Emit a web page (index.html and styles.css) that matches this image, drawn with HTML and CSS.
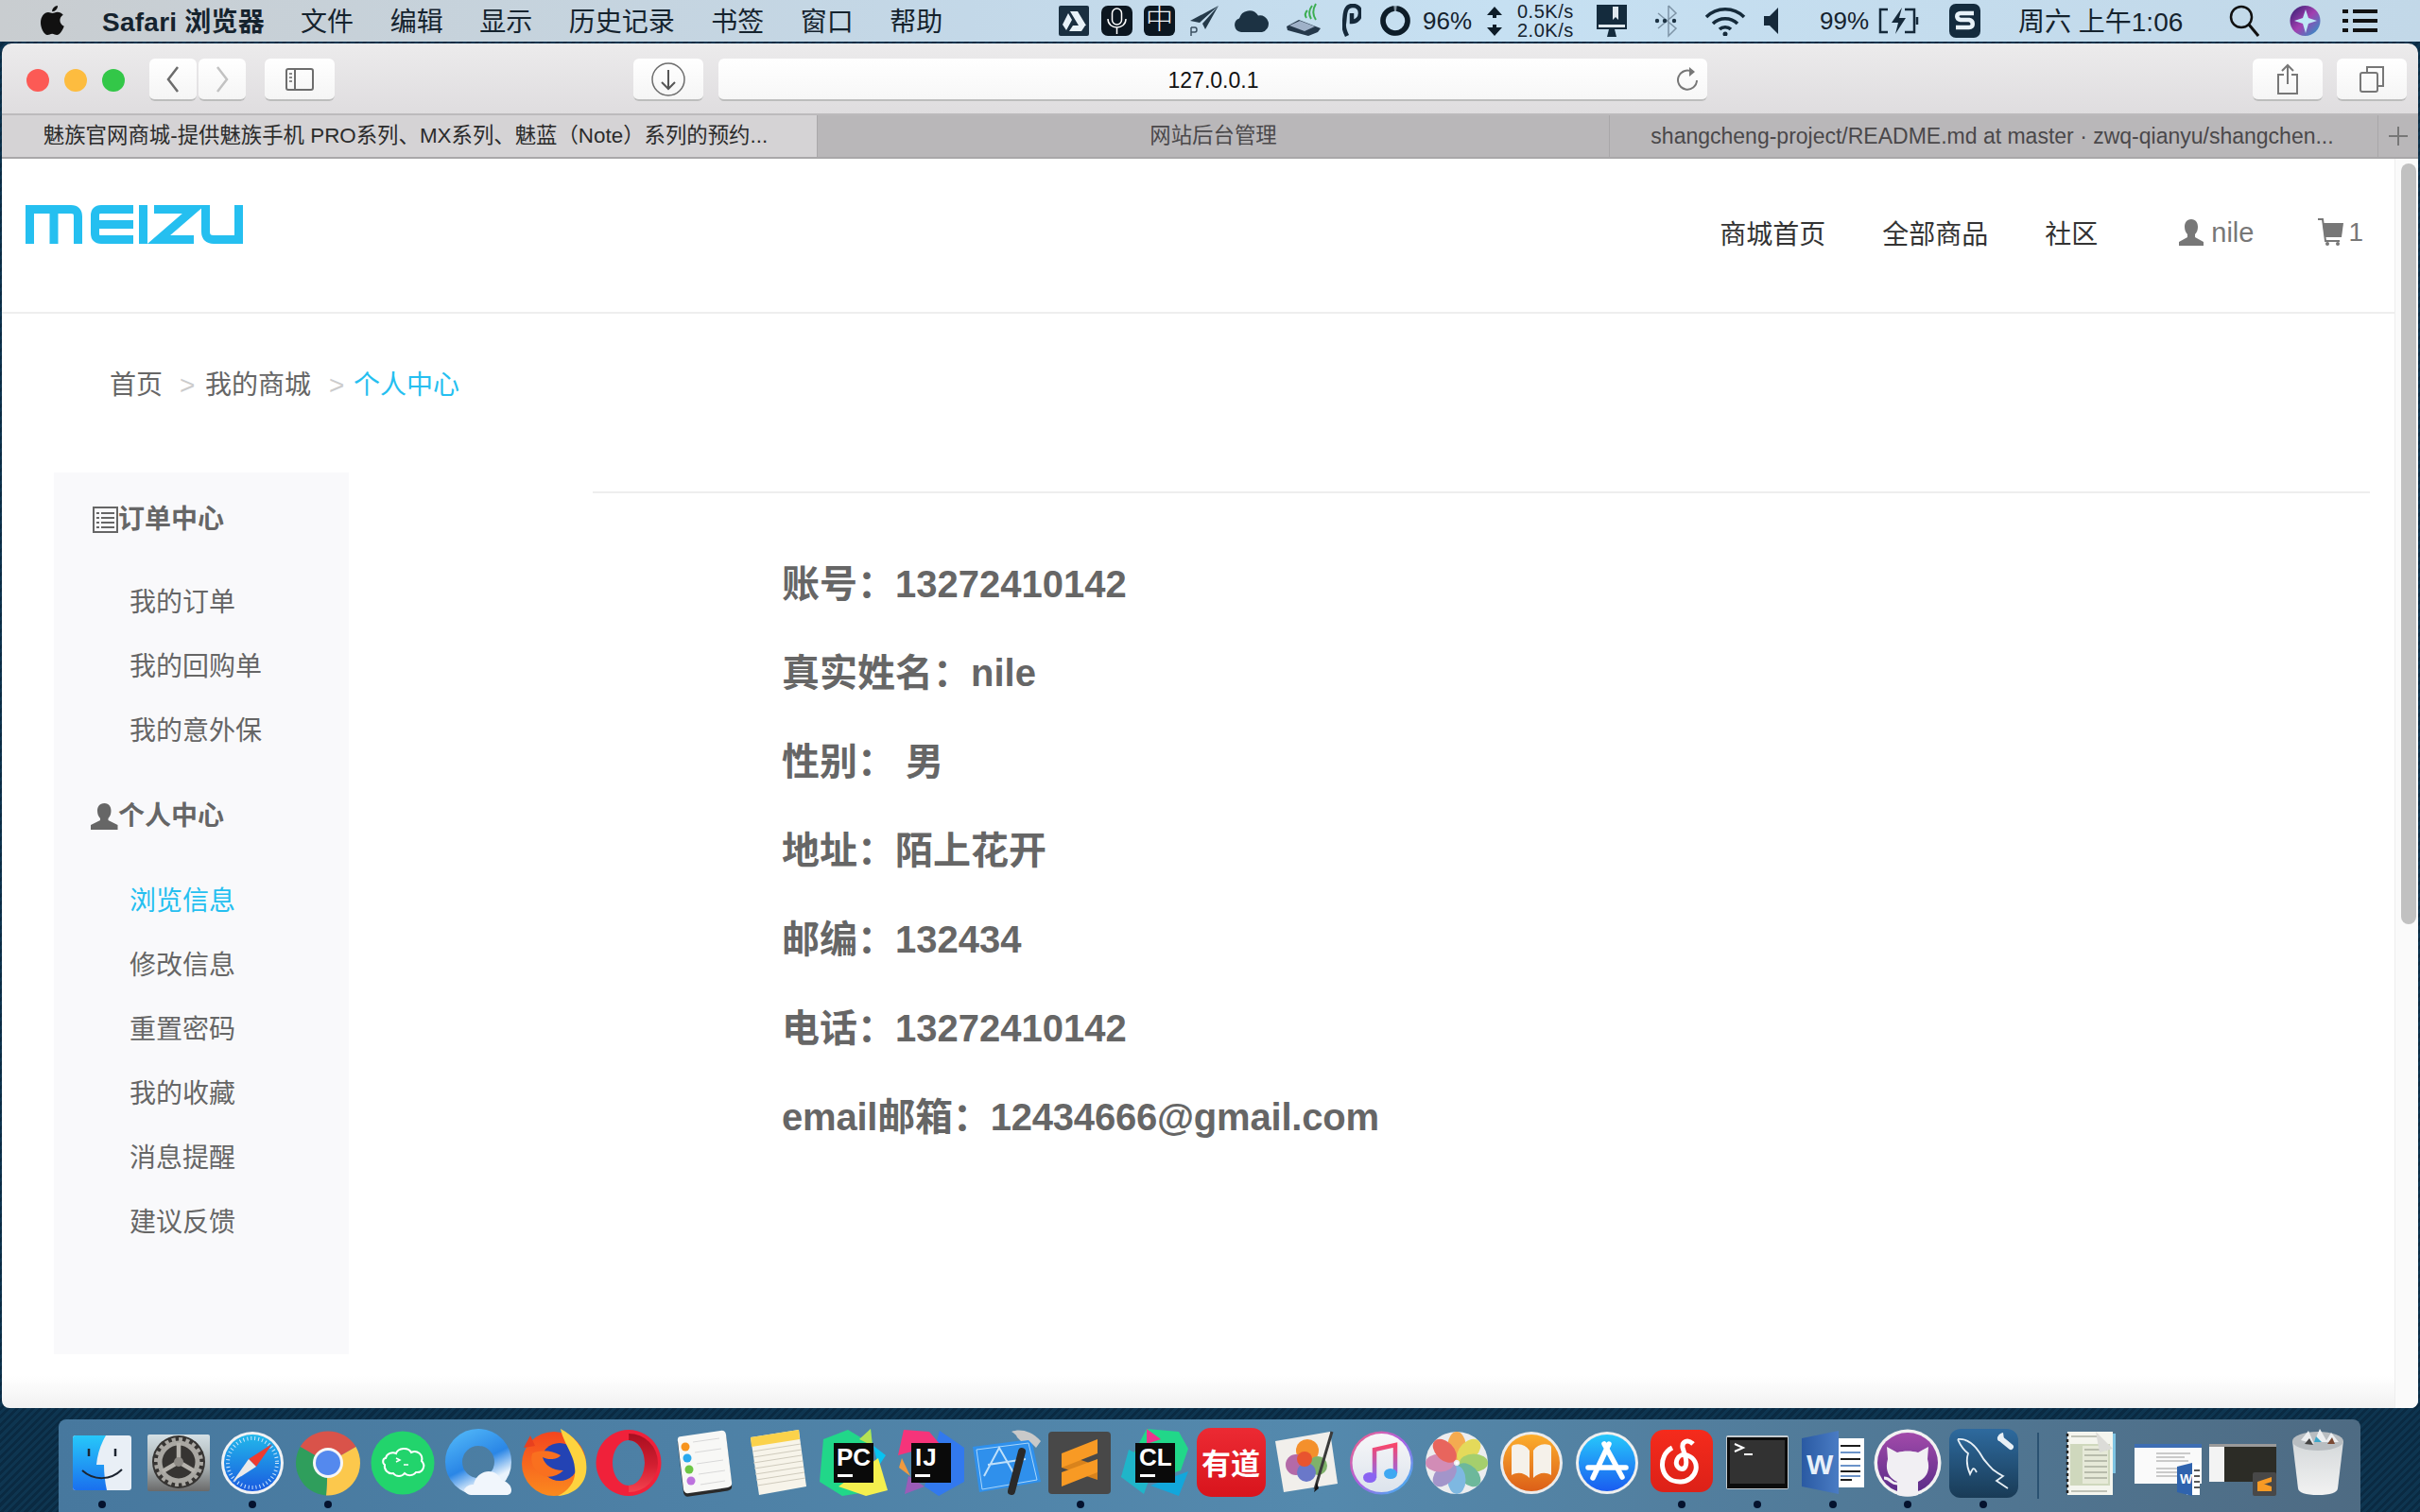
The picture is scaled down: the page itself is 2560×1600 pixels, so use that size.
FILE: index.html
```html
<!DOCTYPE html>
<html lang="zh-CN">
<head>
  <meta charset="UTF-8">
  <title>个人中心</title>
  <link rel="stylesheet" href="styles.css">
</head>
<body>
  <!-- Menu bar -->
  <header class="menubar">
    <svg class="apple" viewBox="0 0 28 34"><path d="M19 1c.3 3-2.600 6.400-5.800 6.200C12.800 4 16 1.200 19 1zM13.300 9c1.500 0 3-1.300 5.500-1.300 2.200 0 4.500 1.100 6 3.100-5 3-4.200 9.800 1 11.900-1.500 4-4.700 9.300-7.600 9.300-2 0-2.900-1.300-5-1.300s-3 1.300-5 1.300C4.800 32 1 25 1 19 1 12.500 5 8 9 8c1.800 0 3.300 1 4.300 1z" fill="#111"/></svg>
    <span class="menu-app">Safari 浏览器</span>
    <span class="menu-item">文件</span>
    <span class="menu-item">编辑</span>
    <span class="menu-item">显示</span>
    <span class="menu-item">历史记录</span>
    <span class="menu-item">书签</span>
    <span class="menu-item">窗口</span>
    <span class="menu-item">帮助</span>
    <div class="status">
      <svg class="s-drive" viewBox="0 0 32 32"><rect width="32" height="32" rx="2" fill="#1a2f40"/><path d="M12 6h8l9 15h-8zM10 8l4 7-6 11-4-6zM11 27l4-6h13l-4 6z" fill="#e8f2f8"/></svg>
      <svg class="s-mic" viewBox="0 0 33 32"><rect width="33" height="32" rx="7" fill="#0b1620"/><rect x="11.500" y="3" width="10" height="17" rx="5" fill="none" stroke="#fff" stroke-width="1.500"/><path d="M7 14c0 12 19 12 19 0M16.500 23v7" fill="none" stroke="#fff" stroke-width="1.500"/></svg>
      <span class="s-zh">中</span>
      <svg class="s-plane" viewBox="0 0 32 34"><path d="M31 1L1 17l10 2zM31 1L14 20l3 6z" fill="#253a4a"/><path d="M2 24v9M2 24h4q2 0 2 2.500T6 29H2" fill="none" stroke="#3c5162" stroke-width="1.500"/></svg>
      <svg class="s-cloud" viewBox="0 0 37 24"><path d="M8 24a7.500 7.500 0 0 1-2-14.500 11 11 0 0 1 20-3 8 8 0 0 1 4 17.500z" fill="#1c3243"/></svg>
      <svg class="s-usb" viewBox="0 0 38 38"><path d="M1 25l13-7 23 9-3 4-10 4-22-6z" fill="#25384a"/><path d="M4 24l11-5 16 6-11 5z" fill="#9fb1c8"/><path d="M22 16c-2-3-1-6 1-8M27 17c-3-5-2-10 1-14M32 18c-4-6-3-12 0-17" fill="none" stroke="#3cae52" stroke-width="2"/></svg>
      <svg class="s-p" viewBox="0 0 20 36"><path d="M5 34c-3-6-4-10-3-14C3 12 2 2 11 2c5 0 8 3 8 8s-4 9-9 9V10" fill="none" stroke="#15293a" stroke-width="4.500"/></svg>
      <svg class="s-ring" viewBox="0 0 32 34"><circle cx="16" cy="17" r="13" fill="none" stroke="#7f8f9c" stroke-width="5.500"/><circle cx="16" cy="17" r="13" fill="none" stroke="#0d1c28" stroke-width="5.500" stroke-dasharray="78.400 3.300" transform="rotate(-84 16 17)"/></svg>
      <span class="s-batt-pct">96%</span>
      <svg class="s-arrows" viewBox="0 0 18 34"><path d="M9 2l8 9H11v3H7v-3H1zM9 33l8-9H11v-3H7v3H1z" fill="#0d1c28"/></svg>
      <span class="s-net">0.5K/s<br>2.0K/s</span>
      <svg class="s-monitor" viewBox="0 0 34 36"><path d="M1 1h32v26H1z" fill="#142b3d"/><path d="M14 27h6l2 8H12z" fill="#142b3d"/><rect x="3" y="22" width="28" height="3" fill="#dfe8ee"/><path d="M18 3h6v14l-3-3-3 3z" fill="#dfe8ee"/></svg>
      <svg class="s-bt" viewBox="0 0 25 36"><path d="M15 2v32l8-8L4 10M15 2l8 8L4 26" fill="none" stroke="#7e94a6" stroke-width="1.500"/><circle cx="3" cy="18" r="2.200" fill="#1c3243"/><circle cx="11" cy="18" r="2.200" fill="#1c3243"/><circle cx="21" cy="18" r="2.200" fill="#1c3243"/></svg>
      <svg class="s-wifi" viewBox="0 0 46 32"><path d="M3 12c11-11 29-11 40 0M10 19c7-7 19-7 26 0M17 25c3-3 9-3 12 0" fill="none" stroke="#152a3a" stroke-width="3.500"/><circle cx="23" cy="30" r="2.500" fill="#152a3a"/></svg>
      <svg class="s-vol" viewBox="0 0 20 30"><path d="M1 10h6l9-9v28l-9-9H1z" fill="#15293a"/></svg>
      <span class="s-pct">99%</span>
      <svg class="s-batt" viewBox="0 0 45 30"><path d="M10 3H2v24h8M28 3h10v24H28M41 11v8" fill="none" stroke="#15293a" stroke-width="2.500"/><path d="M25 1L14 17h7l-3 12 11-17h-7z" fill="#15293a"/></svg>
      <svg class="s-s" viewBox="0 0 33 36"><rect width="33" height="36" rx="7" fill="#142b3d"/><path d="M26 10H12c-5 0-5 6 0 7h9c5 1 5 8 0 8H7" fill="none" stroke="#e8f2f8" stroke-width="4.500"/></svg>
      <span class="s-clock">周六 上午1:06</span>
      <svg class="s-search" viewBox="0 0 32 34"><circle cx="13" cy="13" r="11" fill="none" stroke="#111" stroke-width="2.500"/><path d="M21 21l10 12" stroke="#111" stroke-width="3"/></svg>
      <svg class="s-siri" viewBox="0 0 33 34"><defs><linearGradient id="siriFill" x1="0" y1="0" x2="1" y2="1"><stop offset="0" stop-color="#2c1d6e"/><stop offset=".5" stop-color="#a23fb0"/><stop offset="1" stop-color="#1c9fc9"/></linearGradient></defs><circle cx="16.500" cy="17" r="16" fill="url(#siriFill)"/><path d="M17 5l3 9 9 3-9 3-3 10-3-10-9-3 9-3z" fill="#bfe8f6"/></svg>
      <svg class="s-list" viewBox="0 0 37 28"><path d="M0 4h6M11 4h26M0 14h6M11 14h26M0 24h6M11 24h26" stroke="#111" stroke-width="4"/></svg>
    </div>
  </header>

  <!-- Safari window -->
  <div class="window">
    <div class="toolbar">
      <div class="lights">
        <span class="light red"></span>
        <span class="light yellow"></span>
        <span class="light green"></span>
      </div>
      <div class="nav-btns">
        <span class="tool-btn btn-arrow"><svg width="16" height="30" viewBox="0 0 16 30"><path d="M13 2L3 15l10 13" fill="none" stroke="#6b6b6b" stroke-width="2.500"/></svg></span>
        <span class="tool-btn btn-arrow"><svg width="16" height="30" viewBox="0 0 16 30"><path d="M3 2l10 13L3 28" fill="none" stroke="#c2c2c2" stroke-width="2.500"/></svg></span>
      </div>
      <span class="tool-btn btn-side"><svg width="30" height="24" viewBox="0 0 30 24"><rect x="1" y="1" width="28" height="22" rx="2" fill="none" stroke="#6d6d6d" stroke-width="2"/><path d="M10 1v22" stroke="#6d6d6d" stroke-width="2"/><path d="M4 6h3M4 10h3M4 14h3" stroke="#8a8a8a" stroke-width="2"/></svg></span>
      <span class="tool-btn btn-dl"><svg width="38" height="38" viewBox="0 0 38 38"><circle cx="19" cy="19" r="17" fill="none" stroke="#6d6d6d" stroke-width="1.500"/><path d="M19 9v20M12 22l7 7 7-7" fill="none" stroke="#555" stroke-width="2"/></svg></span>
      <div class="urlbar">
        <span class="url-text">127.0.0.1</span>
        <svg class="reload" width="24" height="28" viewBox="0 0 24 28"><path d="M17 6a10 10 0 1 0 5 9" fill="none" stroke="#777" stroke-width="2"/><path d="M14 1l6 5-6 5z" fill="#777"/></svg>
      </div>
      <span class="tool-btn btn-share"><svg width="24" height="34" viewBox="0 0 24 34"><path d="M8 12H2v20h20V12h-6" fill="none" stroke="#777" stroke-width="2"/><path d="M12 22V2M6 8l6-6 6 6" fill="none" stroke="#777" stroke-width="2"/></svg></span>
      <span class="tool-btn btn-tabs"><svg width="28" height="30" viewBox="0 0 28 30"><path d="M9 7V2h17v20h-5" fill="none" stroke="#777" stroke-width="2"/><rect x="2" y="8" width="18" height="20" rx="2" fill="none" stroke="#777" stroke-width="2"/></svg></span>
    </div>

    <div class="tabs">
      <div class="tab tab-first">魅族官网商城-提供魅族手机 PRO系列、MX系列、魅蓝（Note）系列的预约...</div>
      <div class="tab tab-second">网站后台管理</div>
      <div class="tab tab-third">shangcheng-project/README.md at master · zwq-qianyu/shangchen...</div>
      <div class="tab tab-plus"><svg width="22" height="22" viewBox="0 0 22 22"><path d="M11 1v20M1 11h20" stroke="#777" stroke-width="2"/></svg></div>
    </div>

    <div class="page">
      <div class="page-body">
        <!-- Site header -->
        <div class="site-header">
          <svg class="logo" viewBox="0 0 230 41"><g fill="none" stroke="#25bff0" stroke-width="9"><path d="M4.500 41V4.500H48q7.500 0 7.500 7.500v29M30 4.500V41"/><path d="M114 4.500H80q-6.500 0-6.500 6.500v19q0 6.500 6.500 6.500h34M73 20.500h41"/><path d="M124.500 0v41"/><path d="M136 4.500h42L141 36.500h37"/><path d="M190.500 0v28q0 8.500 8.500 8.500h26.500V0"/></g></svg>
          <nav class="site-nav">
            <a class="nav-link">商城首页</a>
            <a class="nav-link">全部商品</a>
            <a class="nav-link">社区</a>
            <span class="nav-user">
              <svg width="28" height="30" viewBox="0 0 28 30"><path d="M14 1c5 0 7 4 7 8 0 3-1 6-3 8v3l9 5v4H1v-4l9-5v-3C8 15 7 12 7 9c0-4 2-8 7-8z" fill="#777"/></svg>
              nile
            </span>
            <span class="nav-cart">
              <svg width="28" height="30" viewBox="0 0 28 30"><path d="M1 1h5l3 23h15" fill="none" stroke="#777" stroke-width="2"/><path d="M6 5h22l-2 15H8z" fill="#777"/><circle cx="11" cy="27" r="2" fill="#777"/><circle cx="22" cy="27" r="2" fill="#777"/></svg>
              1
            </span>
          </nav>
        </div>

        <div class="crumbs">
          <span>首页</span>
          <span class="crumb-sep sep-a">&gt;</span>
          <span>我的商城</span>
          <span class="crumb-sep sep-b">&gt;</span>
          <span class="crumb-current">个人中心</span>
        </div>

        <div class="content">
          <aside class="side">
            <h3 class="side-title">
              <svg width="27" height="28" viewBox="0 0 27 28"><rect x="1" y="1" width="25" height="26" fill="none" stroke="#666" stroke-width="2"/><path d="M4 7h3M9 7h14M4 12h3M9 12h14M4 17h3M9 17h14M4 22h3M9 22h14" stroke="#666" stroke-width="2"/></svg>订单中心
            </h3>
            <ul class="side-list">
              <li>我的订单</li>
              <li>我的回购单</li>
              <li>我的意外保</li>
            </ul>
            <h3 class="side-title side-title-second">
              <svg class="title-user" width="29" height="28" viewBox="0 0 29 28"><path d="M14.500 0c5 0 7 4 7 8 0 3-1 6-3 8v2l10 5v5H0v-5l10-5v-2c-2-2-3-5-3-8 0-4 2-8 7.500-8z" fill="#666"/></svg>个人中心
            </h3>
            <ul class="side-list side-list-second">
              <li class="is-active">浏览信息</li>
              <li>修改信息</li>
              <li>重置密码</li>
              <li>我的收藏</li>
              <li>消息提醒</li>
              <li>建议反馈</li>
            </ul>
          </aside>
          <main class="info">
            <div class="info-rule"></div>
            <div class="info-rows">
              <p>账号：13272410142</p>
              <p>真实姓名：nile</p>
              <p>性别：&nbsp;男</p>
              <p>地址：陌上花开</p>
              <p>邮编：132434</p>
              <p>电话：13272410142</p>
              <p class="row-email">email邮箱：12434666@gmail.com</p>
            </div>
          </main>
        </div>
      </div>
      <div class="scrollbar"><div class="scroll-thumb"></div></div>
    </div>
  </div>

  <!-- Dock -->
  <footer class="dock">
    <!-- Finder -->
    <div class="dock-item is-running"><svg viewBox="0 0 80 80"><defs><linearGradient id="finderBlue" x1="0" y1="0" x2="0" y2="1"><stop offset="0" stop-color="#27c8fa"/><stop offset="1" stop-color="#1a70ee"/></linearGradient></defs><rect x="9" y="11" width="62" height="58" rx="3" fill="#e9eff6"/><path d="M12 11h32c-6 10-9 21-10 31h8c0 9 1 18 3 27H12q-3 0-3-3V14q0-3 3-3z" fill="url(#finderBlue)"/><path d="M26 25v8M54 25v8" stroke="#1c2430" stroke-width="2.500"/><path d="M19 48c12 11 30 11 42-1" fill="none" stroke="#1c2430" stroke-width="2"/></svg></div>
    <!-- System Preferences -->
    <div class="dock-item"><svg viewBox="0 0 80 80"><defs><linearGradient id="prefsBg" x1="0" y1="0" x2="0" y2="1"><stop offset="0" stop-color="#d4e0e5"/><stop offset=".6" stop-color="#a4acae"/><stop offset="1" stop-color="#6a6a6a"/></linearGradient></defs><rect x="8" y="10" width="66" height="60" rx="2" fill="url(#prefsBg)"/><circle cx="41" cy="39" r="28" fill="#363432"/><circle cx="41" cy="39" r="20" fill="none" stroke="#a9a7a2" stroke-width="5"/><circle cx="41" cy="39" r="24" fill="none" stroke="#a9a7a2" stroke-width="4" stroke-dasharray="4 3.500"/><path d="M41 39V19M41 39L24 49M41 39l17 10" stroke="#b5b2ac" stroke-width="4.500"/><circle cx="41" cy="39" r="5" fill="#8e8b86"/></svg></div>
    <!-- Safari -->
    <div class="dock-item is-running"><svg viewBox="0 0 80 80"><defs><linearGradient id="safariBlue" x1="0" y1="0" x2="0" y2="1"><stop offset="0" stop-color="#22b8ea"/><stop offset="1" stop-color="#1a5be0"/></linearGradient></defs><circle cx="40" cy="40" r="33" fill="#f1f2f4"/><circle cx="40" cy="40" r="30" fill="url(#safariBlue)"/><circle cx="40" cy="40" r="26" fill="none" stroke="#cfe6fb" stroke-width="4" stroke-dasharray="1 3"/><path d="M61 20L36 36l8 8z" fill="#ee3b30"/><path d="M19 60l25-16-8-8z" fill="#eaeaea"/></svg></div>
    <!-- Chrome -->
    <div class="dock-item is-running"><svg viewBox="0 0 80 80"><path d="M40 40L10.500 23A34.500 34.500 0 0 1 69.500 23z" fill="#d9534a"/><path d="M40 40L69.500 23A34.500 34.500 0 0 1 38 74.500z" fill="#fcc84c"/><path d="M40 40L38 74.500A34.500 34.500 0 0 1 10.500 23z" fill="#2f9e5c"/><circle cx="40" cy="40" r="16" fill="#f6f6f6"/><circle cx="40" cy="40" r="13" fill="#5489ee"/></svg></div>
    <!-- Green cloud -->
    <div class="dock-item"><svg viewBox="0 0 80 80"><circle cx="40" cy="40" r="33.500" fill="#22d46c"/><path d="M22 35c1-5 7-7 11-5 2-6 13-7 16-1 6-3 13 2 11 9 5 5 1 13-6 12-3 4-9 4-12 1-3 4-9 4-12 0-6 1-10-4-9-9-3-2-2-7 1-7z" fill="none" stroke="#fff" stroke-width="2"/><path d="M33 35l4 2-4 2M41 42h5" fill="none" stroke="#fff" stroke-width="1.500"/></svg></div>
    <!-- QQ browser -->
    <div class="dock-item"><svg viewBox="0 0 80 80"><defs><linearGradient id="qqRing" x1="0" y1="0" x2=".5" y2="1"><stop offset="0" stop-color="#4bb0f6"/><stop offset=".6" stop-color="#2a86e6"/><stop offset="1" stop-color="#e9f3fc"/></linearGradient></defs><circle cx="40" cy="39" r="26" fill="none" stroke="url(#qqRing)" stroke-width="18"/><path d="M34 74c-5 0-8-2-9-6 3-4 6-5 10-5 2-9 9-14 16-14 7 0 12 5 13 9 7 2 11 6 11 11 0 3-2 5-6 5z" fill="#f1f6fc"/></svg></div>
    <!-- Firefox -->
    <div class="dock-item"><svg viewBox="0 0 80 80"><defs><linearGradient id="foxBody" x1="0" y1="0" x2="0" y2="1"><stop offset="0" stop-color="#f4451f"/><stop offset="1" stop-color="#fb8a1e"/></linearGradient></defs><circle cx="40" cy="41" r="34" fill="url(#foxBody)"/><path d="M8 24l7-13 5 11z" fill="#e8401f"/><circle cx="46" cy="39" r="20" fill="#2343b4"/><path d="M17 30c8-4 20-4 30 2-3 5-14 5-19 2 2 8 10 14 22 14-6 6-14 8-21 6-9-4-15-14-12-24z" fill="#f9701f"/><path d="M47 4c16 8 30 26 27 46-2 14-14 24-30 25 12-6 20-16 18-30-1-14-12-26-15-41z" fill="#fdd33f"/></svg></div>
    <!-- Opera -->
    <div class="dock-item"><svg viewBox="0 0 80 80"><defs><linearGradient id="operaDark" x1="0" y1="0" x2="0" y2="1"><stop offset="0" stop-color="#a70f20"/><stop offset=".55" stop-color="#d31f31"/><stop offset="1" stop-color="#f4434f"/></linearGradient></defs><path fill-rule="evenodd" d="M40 5a34.500 35 0 1 0 .01 0zM40 16a17 24 0 1 1-.01 0z" fill="#f0213a"/><path fill-rule="evenodd" d="M40 9a31 31 0 0 1 0 62 17 24 0 0 0 0-7 17 24 0 0 0 0-48 17 24 0 0 0 0-7z" fill="url(#operaDark)"/></svg></div>
    <!-- Reminders -->
    <div class="dock-item"><svg viewBox="0 0 80 80"><path d="M16 13L57 6q5-1 6 4l6 52q1 5-4 6L24 74q-5 1-6-4l-6-52q-1-5 4-5z" fill="#2a2a2a" transform="translate(0 1.500)"/><path d="M16 12L57 6q5-1 6 4l6 50q1 5-4 6L24 72q-5 1-6-4l-6-51q-1-5 4-5z" fill="#f8f8f6"/><circle cx="20" cy="23" r="4.500" fill="#f7941e"/><circle cx="22" cy="35" r="4.500" fill="#2aa9ee"/><circle cx="24" cy="47" r="4.500" fill="#6cc644"/><circle cx="26" cy="59" r="4.500" fill="#bd72de"/><path d="M28 18l28-4M30 29l28-4M32 41l28-4M34 52l28-4M36 63l26-4" stroke="#d8d8d8" stroke-width="1"/></svg></div>
    <!-- Notes -->
    <div class="dock-item"><svg viewBox="0 0 80 80"><path d="M10 13L61 5l8 60-50 9z" fill="#f7f4ea"/><path d="M10 13L61 5l1 10-51 8z" fill="#fbd24a"/><path d="M12 28l51-8M13 34l51-8M13 40l51-8M14 46l51-8M15 52l51-8M16 58l51-8M17 64l51-8" stroke="#cfcbbd" stroke-width="1"/></svg></div>
    <!-- PyCharm -->
    <div class="dock-item"><svg viewBox="0 0 80 80"><path d="M7 15L33 5l15 9L57 4l2 18-13 50-19 3-24-15z" fill="#21d789"/><path d="M45 15L57 4l2 18z" fill="#b5e354"/><path d="M60 22l13 10-8 12z" fill="#07c3f2"/><path d="M23 65L65 35l10 34-23 6z" fill="#f4f04e"/><rect x="18" y="19" width="42" height="42" fill="#0a0a0a"/><text class="jb" x="21" y="43">PC</text><rect x="22" y="52" width="16" height="3" fill="#fff"/></svg></div>
    <!-- IntelliJ -->
    <div class="dock-item"><svg viewBox="0 0 80 80"><path d="M50 6l26 18v36L49 75 34 65z" fill="#3279ee"/><path d="M12 5l27 2 11 13-44 12z" fill="#f6347a"/><path d="M10 35L7 45l12 9z" fill="#f09a3e"/><path d="M17 54l-4 19 21-8z" fill="#9b5cb8"/><rect x="20" y="19" width="42" height="42" fill="#0a0a0a"/><text class="jb" x="24" y="43" letter-spacing="1">IJ</text><rect x="24" y="52" width="16" height="3" fill="#fff"/></svg></div>
    <!-- Xcode -->
    <div class="dock-item"><svg viewBox="0 0 80 80"><path d="M6 23l62-8 10 45-65 11z" fill="#2f90ec"/><path d="M10 26l55-7 9 39-58 10z" fill="none" stroke="#a9d6fa" stroke-width="1"/><path d="M18 54L34 24l16 28M22 42l40-6" fill="none" stroke="#bfe0fa" stroke-width="2"/><path d="M58 28L47 70" stroke="#2a2a2a" stroke-width="8" stroke-linecap="round"/><path d="M47 7c8-3 20-2 31 10l-5 7-8-8-8 1-4-4c-1-3-3-4-6-6z" fill="#c9c9c9"/></svg></div>
    <!-- Sublime -->
    <div class="dock-item is-running"><svg viewBox="0 0 80 80"><rect x="6" y="7" width="66" height="66" rx="4" fill="#484848"/><path d="M20 30v15l38 13V43z" fill="#d9831c"/><path d="M58 15L20 30v15l38-15z" fill="#f89a24"/><path d="M58 36L20 50v15l38-15z" fill="#f89a24"/></svg></div>
    <!-- CLion -->
    <div class="dock-item"><svg viewBox="0 0 80 80"><path d="M31 4l34 3 10 18-8 23-30 10-33-3z" fill="#21d789"/><path d="M31 4l15 11-15 5z" fill="#ed358c"/><path d="M4 55L12 26 40 40 28 73z" fill="#1fb5c9"/><path d="M75 49l-10 26-30-11z" fill="#12a7dc"/><rect x="19" y="19" width="42" height="42" fill="#0a0a0a"/><text class="jb" x="23" y="43">CL</text><rect x="24" y="52" width="16" height="3" fill="#fff"/></svg></div>
    <!-- Youdao -->
    <div class="dock-item"><svg viewBox="0 0 80 80"><defs><linearGradient id="ydBg" x1="0" y1="0" x2="0" y2="1"><stop offset="0" stop-color="#ec2a33"/><stop offset="1" stop-color="#d8141c"/></linearGradient></defs><rect x="4" y="3" width="73" height="73" rx="15" fill="url(#ydBg)"/><text x="40" y="52" class="yd">有道</text></svg></div>
    <!-- Pixelmator -->
    <div class="dock-item"><svg viewBox="0 0 80 80"><path d="M7 17L65 7l8 55-57 9z" fill="#f1efeb"/><circle cx="41" cy="27" r="12" fill="#f4902c"/><circle cx="29" cy="42" r="11" fill="#b46aa8"/><circle cx="52" cy="43" r="10" fill="#7fb26a"/><circle cx="40" cy="50" r="10" fill="#6a78c9"/><circle cx="38" cy="36" r="8" fill="#e8542f"/><path d="M67 7L49 68" stroke="#3a3a3a" stroke-width="3"/><path d="M51 60l-3 11 5-4z" fill="#111"/></svg></div>
    <!-- iTunes -->
    <div class="dock-item"><svg viewBox="0 0 80 80"><defs><linearGradient id="itRing" x1="0" y1="0" x2="1" y2="1"><stop offset="0" stop-color="#f8637b"/><stop offset=".5" stop-color="#a860e6"/><stop offset="1" stop-color="#2ec4f2"/></linearGradient><linearGradient id="itFace" x1="0" y1="0" x2="0" y2="1"><stop offset="0" stop-color="#f7f7f9"/><stop offset="1" stop-color="#dce3ec"/></linearGradient><linearGradient id="itNote" x1="0" y1="0" x2="0" y2="1"><stop offset="0" stop-color="#f8476c"/><stop offset="1" stop-color="#8a6cf2"/></linearGradient></defs><circle cx="40.500" cy="40" r="33.500" fill="url(#itRing)"/><circle cx="40.500" cy="40" r="31" fill="url(#itFace)"/><path d="M33 56V26l22-5v30" fill="none" stroke="url(#itNote)" stroke-width="4.500"/><ellipse cx="28" cy="55.500" rx="7" ry="5.500" fill="#8a64f2"/><ellipse cx="50" cy="51.500" rx="7" ry="5.500" fill="#3ea8f2"/></svg></div>
    <!-- Photos -->
    <div class="dock-item"><svg viewBox="0 0 80 80"><circle cx="40" cy="40" r="33" fill="#ecedef"/><g class="petals"><ellipse cx="40" cy="22" rx="9.500" ry="15" fill="#f6a33b"/><ellipse cx="40" cy="22" rx="9.500" ry="15" fill="#e3d846" transform="rotate(45 40 40)"/><ellipse cx="40" cy="22" rx="9.500" ry="15" fill="#9ccb5c" transform="rotate(90 40 40)"/><ellipse cx="40" cy="22" rx="9.500" ry="15" fill="#5cb190" transform="rotate(135 40 40)"/><ellipse cx="40" cy="22" rx="9.500" ry="15" fill="#6fb1e0" transform="rotate(180 40 40)"/><ellipse cx="40" cy="22" rx="9.500" ry="15" fill="#9a8ac6" transform="rotate(225 40 40)"/><ellipse cx="40" cy="22" rx="9.500" ry="15" fill="#cf7faf" transform="rotate(270 40 40)"/><ellipse cx="40" cy="22" rx="9.500" ry="15" fill="#e8534a" transform="rotate(315 40 40)"/></g><circle cx="40" cy="40" r="1.500" fill="#fff"/></svg></div>
    <!-- iBooks -->
    <div class="dock-item"><svg viewBox="0 0 80 80"><defs><linearGradient id="bookBg" x1="0" y1="0" x2="0" y2="1"><stop offset="0" stop-color="#fcae2c"/><stop offset="1" stop-color="#dc5f18"/></linearGradient></defs><circle cx="40" cy="40" r="33" fill="#ececec"/><circle cx="40" cy="40" r="30" fill="url(#bookBg)"/><path d="M38 27c-4-6-10-8-17-6-2 1-2 2-2 4v28c7-4 14-2 19 3zM42 27c4-6 10-8 17-6 2 1 2 2 2 4v28c-7-4-14-2-19 3z" fill="#f5f1ea"/></svg></div>
    <!-- App Store -->
    <div class="dock-item"><svg viewBox="0 0 80 80"><defs><linearGradient id="storeBg" x1="0" y1="0" x2="0" y2="1"><stop offset="0" stop-color="#27c8fb"/><stop offset="1" stop-color="#1a5cf0"/></linearGradient></defs><circle cx="40" cy="40" r="33" fill="#efefef"/><circle cx="40" cy="40" r="30" fill="url(#storeBg)"/><path d="M42 20L25 56M37 20l19 35M20 45h40" fill="none" stroke="#fff" stroke-width="5.500" stroke-linecap="round"/></svg></div>
    <!-- NetEase music -->
    <div class="dock-item is-running"><svg viewBox="0 0 80 80"><defs><linearGradient id="neBg" x1="0" y1="0" x2="0" y2="1"><stop offset="0" stop-color="#f52b1c"/><stop offset="1" stop-color="#dc2118"/></linearGradient></defs><rect x="7" y="5" width="66" height="66" rx="14" fill="url(#neBg)"/><path d="M30 24C14 32 16 60 38 60c18 0 24-22 8-28-10-4-16 10-8 14 6 2 8-4 6-12l-3-10c-1-6 5-10 11-4" fill="none" stroke="#fff" stroke-width="5"/></svg></div>
    <!-- Terminal -->
    <div class="dock-item is-running"><svg viewBox="0 0 80 80"><rect x="7" y="11" width="66" height="57" rx="2" fill="#c5ccd1"/><rect x="8" y="13" width="64" height="54" fill="#0c0c0c"/><rect x="11" y="16" width="58" height="46" fill="#323232"/><path d="M16 20l9 4-9 4" fill="none" stroke="#fff" stroke-width="2"/><path d="M26 31h9" stroke="#fff" stroke-width="2"/></svg></div>
    <!-- Word -->
    <div class="dock-item is-running"><svg viewBox="0 0 80 80"><defs><linearGradient id="wordBg" x1="0" y1="0" x2="1" y2="0"><stop offset="0" stop-color="#2a5aa3"/><stop offset="1" stop-color="#4a7cc4"/></linearGradient></defs><rect x="45" y="14" width="28" height="52" fill="#fff"/><path d="M48 22h21M48 36h21M48 49h21M48 58h12" stroke="#1c1c1c" stroke-width="2"/><path d="M48 29h21M48 43h21M48 54h21" stroke="#6b93c9" stroke-width="2"/><path d="M7 14L46 6v67L7 65z" fill="url(#wordBg)"/><text x="12" y="52" class="wd">W</text></svg></div>
    <!-- GitHub desktop -->
    <div class="dock-item is-running"><svg viewBox="0 0 80 80"><defs><linearGradient id="ghBg" x1="0" y1="0" x2="0" y2="1"><stop offset="0" stop-color="#a24aaa"/><stop offset="1" stop-color="#5a2c88"/></linearGradient></defs><circle cx="40" cy="40" r="35.500" fill="#f2f2f2"/><circle cx="40" cy="40" r="32" fill="url(#ghBg)"/><path d="M29 74V60c-10-4-13-14-10-24l-1-13 11 6c7-2 15-2 22 0l11-6-1 13c3 10 0 20-10 24v14c-7 2-15 2-22 0z" fill="#f1eff3"/><path d="M15 56c4 0 6 2 8 4s4 2 6 2" fill="none" stroke="#f1eff3" stroke-width="3"/></svg></div>
    <!-- MySQL workbench -->
    <div class="dock-item is-running"><svg viewBox="0 0 80 80"><defs><linearGradient id="sqlBg" x1="0" y1="0" x2="0" y2="1"><stop offset="0" stop-color="#2e6a9e"/><stop offset="1" stop-color="#193b56"/></linearGradient></defs><rect x="4" y="4" width="73" height="73" rx="12" fill="url(#sqlBg)"/><path d="M13 15c9-1 17 5 23 14 5 10 10 13 14 18 4 3 7 5 11 7l-7 5 12 8M13 15c3 7 7 12 11 15-2 6-1 15 2 22 3-7 4-8 7-2" fill="none" stroke="#e8f0f6" stroke-width="1.800"/><path d="M58 14l11 9" stroke="#e8f0f6" stroke-width="6" stroke-linecap="round"/><path d="M61 8c-5 1-7 5-5 9l6-2z" fill="#e8f0f6"/></svg></div>
    <div class="dock-sep"></div>
    <!-- Minimized windows -->
    <div class="dock-doc doc-a"><svg viewBox="0 0 80 80"><rect x="60" y="9" width="5" height="42" fill="#7fc4e3"/><rect x="14" y="7" width="48" height="67" fill="#f4f5ee"/><rect x="17" y="20" width="42" height="44" fill="#cfd8bd"/><rect x="30" y="22" width="27" height="40" fill="#e6e9d8"/><path d="M32 26h24M32 32h24M32 38h24M32 44h24M32 50h24M32 56h24M18 12h28M18 70h38" stroke="#8a8f80" stroke-width="1"/><path d="M14 9v63" stroke="#222" stroke-width="2.500" stroke-dasharray="3 3"/><path d="M44 7l18 18-14 4z" fill="#dcdcd8"/></svg></div>
    <div class="dock-doc doc-b"><svg viewBox="0 0 80 80"><rect x="5" y="20" width="71" height="42" fill="#fafafa"/><rect x="5" y="20" width="71" height="4" fill="#3d6db3"/><path d="M28 30h36M28 34h30M28 38h34M28 46h24M28 50h30M28 54h26" stroke="#9a9a9a" stroke-width="1"/><rect x="60" y="42" width="14" height="32" fill="#fff"/><path d="M50 44l16-4v35l-16-4z" fill="#2f63ae"/><path d="M68 48h6M68 54h6M68 60h6M68 66h6" stroke="#222" stroke-width="1.500"/><text x="53" y="62" class="wd-small">W</text></svg></div>
    <div class="dock-doc doc-c"><svg viewBox="0 0 80 80"><rect x="5" y="20" width="71" height="40" fill="#f3f3f3"/><rect x="5" y="20" width="71" height="3" fill="#9a9a9a"/><rect x="21" y="23" width="55" height="37" fill="#2c2c26"/><rect x="51" y="50" width="25" height="25" rx="2" fill="#484848"/><path d="M71 55l-15 5v5l15-5z" fill="#f89a24"/><path d="M56 60l15 5v5l-15 0z" fill="#f89a24"/></svg></div>
    <div class="dock-doc doc-d"><svg viewBox="0 0 80 80"><defs><linearGradient id="trashBg" x1="0" y1="0" x2="0" y2="1"><stop offset="0" stop-color="#d4d8da"/><stop offset="1" stop-color="#f2f2f2"/></linearGradient></defs><path d="M13 17h54l-6 50q-1 7-21 7t-21-7z" fill="url(#trashBg)"/><ellipse cx="40" cy="17" rx="27" ry="10" fill="#b8bdc1"/><path d="M22 16l8-10 6 14zM36 18l6-14 8 14zM48 18l6-10 8 10z" fill="#eceef0"/><path d="M26 20l5-6 4 7z" fill="#444"/><path d="M38 12l6 6h-8z" fill="#3ca6c9"/><path d="M50 20l5-7 3 7z" fill="#7b4a34"/></svg></div>
  </footer>
</body>
</html>
```

FILE: styles.css
```css
/* Desktop */
body {
  margin: 0;
  width: 2560px;
  height: 1600px;
  overflow: hidden;
  font-family: "Liberation Sans", "Noto Sans CJK SC", sans-serif;
  color: #666;
  background: repeating-linear-gradient(135deg, #0e3550 0, #0e3550 3px, #0a2a42 3px, #0a2a42 6px);
}

/* Menu bar */
.menubar {
  height: 44px;
  display: flex;
  align-items: center;
  padding-left: 42px;
  box-sizing: border-box;
  font-size: 28px;
  color: #15232e;
  background: linear-gradient(90deg, #c9cdd0 0, #c3d8e8 40%, #c6e0f2 62%, #c2d8e8 100%);
}

.apple {
  width: 28px;
  height: 34px;
  margin-right: 38px;
}

.menu-app {
  font-weight: bold;
  margin: 0 38px 3px 0;
  white-space: nowrap;
  letter-spacing: .25px;
}

.menu-item {
  margin: 0 38.500px 3px 0;
}

.status {
  margin-left: auto;
  padding-right: 45px;
  display: flex;
  align-items: center;
}

.status svg { display: block; flex: none; }

.s-drive { width: 32px; height: 32px; margin-right: 13px; }
.s-mic { width: 33px; height: 32px; margin-right: 12px; }
.s-zh {
  width: 33px;
  height: 32px;
  margin-right: 15px;
  border-radius: 6px;
  background: #0b1620;
  color: #eef3f6;
  font-size: 29px;
  font-weight: 300;
  line-height: 30px;
  text-align: center;
  overflow: hidden;
}
.s-plane { width: 32px; height: 34px; margin-right: 15px; }
.s-cloud { width: 37px; height: 24px; margin-right: 18px; }
.s-usb { width: 38px; height: 38px; margin-right: 22px; }
.s-p { width: 20px; height: 36px; margin-right: 20px; }
.s-ring { width: 32px; height: 34px; margin-right: 13px; }
.s-batt-pct { width: 53px; margin-right: 14px; font-size: 26px; }
.s-arrows { width: 18px; height: 34px; margin-right: 15px; }
.s-net {
  width: 60px;
  margin-right: 23px;
  font-size: 20px;
  line-height: 20px;
  white-space: nowrap;
  letter-spacing: .5px;
}
.s-monitor { width: 34px; height: 36px; margin-right: 28px; }
.s-bt { width: 25px; height: 36px; margin-right: 27px; }
.s-wifi { width: 46px; height: 32px; margin-right: 17px; }
.s-vol { width: 20px; height: 30px; margin-right: 40px; }
.s-pct { width: 53px; margin-right: 9px; font-size: 26px; }
.s-batt { width: 45px; height: 30px; margin-right: 30px; }
.s-s { width: 33px; height: 36px; margin-right: 40px; }
.s-clock { width: 177px; margin: 0 46px 3px 0; font-size: 28px; white-space: nowrap; }
.s-search { width: 32px; height: 34px; margin-right: 32px; }
.s-siri { width: 33px; height: 34px; margin-right: 23px; }
.s-list { width: 37px; height: 28px; }

/* Safari window */
.window {
  margin: 2px 2px 0;
  height: 1444px;
  display: flex;
  flex-direction: column;
  border-radius: 10px 10px 8px 8px;
  overflow: hidden;
}

.toolbar {
  height: 71px;
  padding-top: 3px;
  display: flex;
  align-items: center;
  border-bottom: 2px solid #bcbabc;
  background: linear-gradient(#ecebec, #dfdddf);
  flex: none;
}

.lights {
  display: flex;
  gap: 16px;
  margin-left: 26px;
  margin-right: 26px;
}

.light {
  width: 24px;
  height: 24px;
  border-radius: 50%;
}

.red { background: #fc5a55; }
.yellow { background: #fdbc3f; }
.green { background: #33c748; }

.nav-btns {
  display: flex;
  gap: 2px;
  margin-right: 20px;
}

.tool-btn {
  height: 45px;
  box-sizing: border-box;
  display: flex;
  align-items: center;
  justify-content: center;
  border-radius: 6px;
  background: linear-gradient(#fff, #f5f5f5);
  border-bottom: 2px solid #bdbdbd;
}

.btn-arrow { width: 50px; }
.btn-side { width: 74px; margin-right: 316px; }
.btn-dl { width: 74px; margin-right: 16px; }
.btn-share { width: 74px; margin-right: 15px; }
.btn-tabs { width: 74px; }

.urlbar {
  width: 1046px;
  height: 45px;
  margin-right: 577px;
  box-sizing: border-box;
  display: flex;
  align-items: center;
  padding: 0 4px 0 0;
  border-radius: 6px;
  background: linear-gradient(#fff, #f7f7f7);
  border-bottom: 2px solid #bdbdbd;
}

.url-text {
  flex: 1;
  padding: 3px 0 0 34px;
  text-align: center;
  font-size: 23px;
  color: #111;
}

.reload { margin-right: 5px; }

.tabs {
  height: 44px;
  display: flex;
  line-height: 44px;
  border-bottom: 2px solid #a9a7a9;
  background: #b9b7b9;
  flex: none;
}

.tab {
  box-sizing: border-box;
  text-align: center;
  white-space: nowrap;
  overflow: hidden;
  color: #4a484a;
  font-size: 22.400px;
}

.tab-first { width: 863px; padding-right: 8px; background: #d5d3d5; color: #2b2b2b; border-right: 1px solid #a9a7a9; }
.tab-second { width: 838px; border-right: 1px solid #a9a7a9; }
.tab-third { width: 813px; padding-right: 3px; border-right: 1px solid #a9a7a9; font-size: 23px; }
.tab-plus { flex: 1; display: flex; align-items: center; justify-content: center; }

/* Page */
.page {
  flex: 1;
  display: flex;
  background: linear-gradient(#fff calc(100% - 34px), #f1f1f1);
  min-height: 0;
}

.page-body { width: 2531px; flex: none; }

.scrollbar {
  flex: 1;
  padding: 5px 0 0 6px;
  border-left: 1px solid #eee;
  background: #fafafa;
}

.scroll-thumb {
  width: 16px;
  height: 805px;
  border-radius: 8px;
  background: #c1c1c1;
}

.site-header {
  height: 162px;
  display: flex;
  justify-content: space-between;
  border-bottom: 2px solid #eee;
}

.logo {
  width: 230px;
  height: 41px;
  margin: 49px 0 0 25px;
}

.site-nav {
  display: flex;
  align-items: center;
  height: 40px;
  margin-top: 58px;
  padding-right: 33px;
  font-size: 28px;
}

.nav-link {
  color: #333;
  margin-right: 60px;
}

.nav-link:nth-child(3) { margin-right: 85px; }

.nav-user, .nav-cart {
  display: flex;
  align-items: center;
  gap: 5px;
  color: #777;
}

.nav-user { gap: 7px; margin-right: 67px; font-size: 29px; }

.crumbs {
  display: flex;
  padding: 56px 0 0 114px;
  font-size: 28px;
  line-height: 40px;
  color: #666;
}

.crumb-sep { color: #ccc; width: 16px; }
.sep-a { margin: 0 11px 0 18px; }
.sep-b { margin: 0 10px 0 19px; }
.crumb-current { color: #25bff0; }

.content {
  display: flex;
  margin-top: 72px;
}

.side {
  width: 312px;
  height: 933px;
  margin-left: 55px;
  padding: 30px 0 0 41px;
  box-sizing: border-box;
  background: #f9f9fb;
  flex: none;
}

.side-title {
  display: flex;
  align-items: center;
  margin: 0 0 34px;
  font-size: 28px;
  line-height: 40px;
  font-weight: bold;
}

.side-title-second { margin: 36px 0 36px; }

.title-user { margin-left: -2px; }

.side-list {
  list-style: none;
  margin: 0;
  padding: 0 0 0 39px;
  font-size: 28px;
  line-height: 68px;
}

.is-active { color: #25bff0; }

.info {
  width: 1880px;
  margin-left: 258px;
  flex: none;
}

.info-rule {
  height: 2px;
  margin-top: 20px;
  background: #eee;
}

.info-rows {
  padding: 49px 0 0 200px;
  font-size: 40px;
  font-weight: bold;
  line-height: 94px;
}

.info-rows p { margin: 0; }

.row-email { letter-spacing: -.2px; }

/* Dock */
.dock {
  margin: 12px 0 0 62px;
  width: 2435px;
  height: 98px;
  box-sizing: border-box;
  padding: 6px 0 0 6px;
  display: flex;
  border-radius: 8px 8px 0 0;
  background: linear-gradient(90deg, #47789e 0, #5489ad 55%, #4e6b83 100%);
}

.dock-item {
  width: 79.600px;
  flex: none;
  height: 92px;
  position: relative;
}

.dock-item svg, .dock-doc svg {
  display: block;
  width: 80px;
  height: 80px;
}

.dock-item.is-running::after {
  content: "";
  position: absolute;
  left: 36px;
  top: 80px;
  width: 8px;
  height: 8px;
  border-radius: 50%;
  background: #04122e;
}

.dock-sep {
  width: 2px;
  height: 70px;
  margin: 8px 0 0 18px;
  background: #2b5272;
  flex: none;
}

.dock-doc {
  width: 79.500px;
  flex: none;
}

.doc-a { margin-left: 16px; }

.petals { opacity: .88; }

.jb { fill: #fff; font-size: 26px; font-weight: bold; }
.yd { fill: #fff; font-size: 31px; font-weight: bold; text-anchor: middle; }
.wd { fill: #e8f0fa; font-size: 30px; font-weight: bold; }
.wd-small { fill: #fff; font-size: 14px; font-weight: bold; }
```
